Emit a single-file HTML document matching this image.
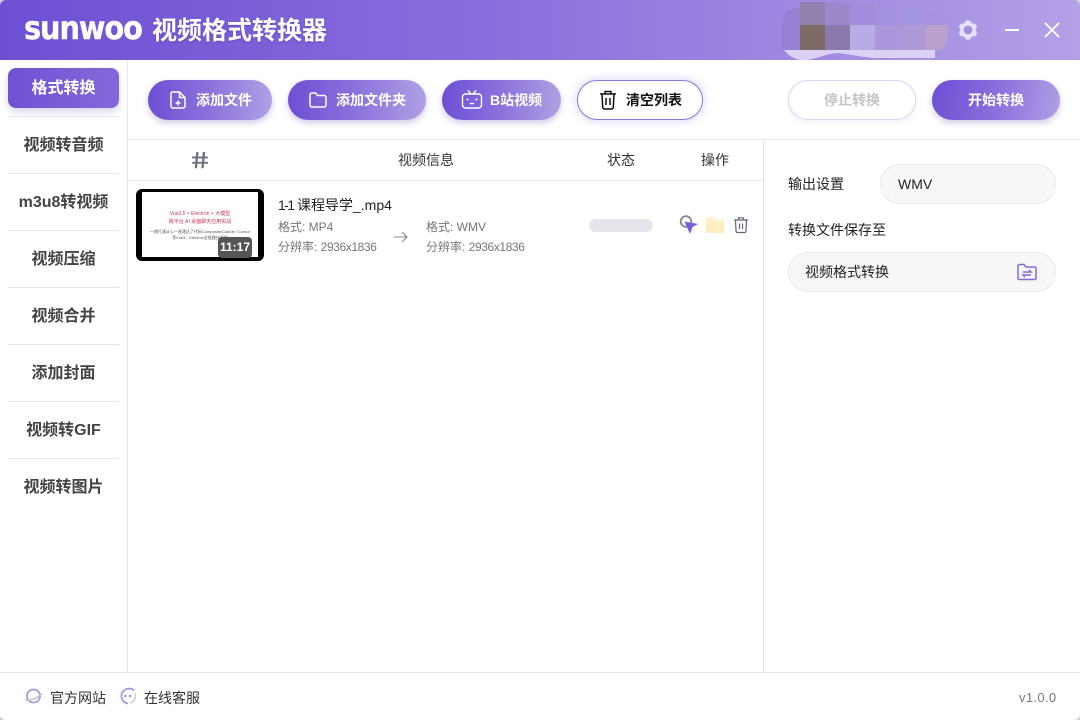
<!DOCTYPE html>
<html><head><meta charset="utf-8"><style>
*{box-sizing:border-box;margin:0;padding:0}
html,body{width:1080px;height:720px;overflow:hidden;background:#d0d0d0}
body{font-family:"Liberation Sans","Noto Sans CJK SC",sans-serif;color:#222}
#app{position:absolute;left:0;top:0;width:1080px;height:720px;background:#fff;border-radius:6px;overflow:hidden}
.a{position:absolute;white-space:nowrap}
#hd{left:0;top:0;width:1080px;height:60px;background:linear-gradient(90deg,#6d4fd3 0%,#8a6edd 45%,#b3a0e6 100%)}
.nav{left:8px;width:111px;text-align:center;font-size:16px;font-weight:700;color:#444;height:40px;line-height:40px}
.sep{left:8px;width:111px;height:1px;background:#e6e6e6}
.btn{height:40px;border-radius:20px;background:linear-gradient(90deg,#6d4fd3 0%,#8c72dc 50%,#b0a0e4 100%);box-shadow:0 3px 7px rgba(90,70,170,.28);color:#fff;font-size:14px;font-weight:700;line-height:40px}
.btn span{position:absolute;top:0}
.btn svg{position:absolute}
.th{font-size:14px;color:#333;top:150px;line-height:20px}
.g{font-size:12px;color:#777;line-height:16px}
.g b{font-weight:400;letter-spacing:-.4px}
.inp{background:#f7f7f7;border:1px solid #e8e8e8;border-radius:20px;height:40px;line-height:38px;font-size:14px;color:#222}
</style></head><body><div id="app">
<div class="a" id="hd"></div>
<div class="a" style="left:24px;top:10px;font-family:'DejaVu Sans',sans-serif;font-size:32px;font-weight:700;color:#fff;line-height:36px;letter-spacing:-1.2px;transform:scaleX(.9);transform-origin:left;-webkit-text-stroke:.4px #fff">sunwoo</div>
<div class="a" style="left:152px;top:14px;font-size:25px;font-weight:700;color:#fff;line-height:34px;text-shadow:0 1px 2px rgba(60,40,130,.35)">视频格式转换器</div>
<svg class="a" style="left:775px;top:0" width="190" height="62">
<path d="M25 25V2H75L100 3V25Z" fill="#a08cd8" opacity=".55"/><rect x="25" y="2" width="25" height="23" fill="#9080ae"/><rect x="50" y="3" width="25" height="22" fill="#9c89cc"/><rect x="125" y="8" width="25" height="17" fill="#a296e4" opacity=".8"/>
<rect x="100" y="5" width="25" height="20" fill="#a491e0" opacity=".5"/>
<path d="M14 10L25 8V25H25V50H7V28Q7 14 14 10Z" fill="#9580d4"/><rect x="25" y="25" width="25" height="25" fill="#7f6b66"/><rect x="50" y="25" width="25" height="25" fill="#8b78ac"/><rect x="75" y="25" width="25" height="25" fill="#b9ace6"/><rect x="100" y="25" width="25" height="25" fill="#ac96dc"/><rect x="125" y="25" width="25" height="25" fill="#ae9ad8"/>
<path d="M150 12Q173 14 173 25H150Z" fill="#a692de" opacity=".8"/><path d="M150 25H173V32Q173 45 165 50H150Z" fill="#b8a2cc"/>
<path d="M9 50H160V58H100C85 57 75 54 62 53C50 54 40 60 28 60C20 60 14 56 9 50Z" fill="#dbd2f3"/>
</svg>
<svg class="a" style="left:956px;top:18px" width="24" height="24" viewBox="0 0 24 24"><g fill="#e6e1f5"><circle cx="12" cy="12" r="7.800"/><circle cx="12" cy="5.500" r="3.300"/><circle cx="12" cy="18.500" r="3.300"/><circle cx="6.500" cy="8.800" r="3.300"/><circle cx="17.500" cy="8.800" r="3.300"/><circle cx="6.500" cy="15.200" r="3.300"/><circle cx="17.500" cy="15.200" r="3.300"/></g><circle cx="12" cy="12" r="4.400" fill="#a591e2"/></svg>
<div class="a" style="left:1005px;top:29px;width:14px;height:2px;background:#fff"></div>
<svg class="a" style="left:1043px;top:21px" width="18" height="18"><path d="M2 2L16 16M16 2L2 16" stroke="#fff" stroke-width="1.800" fill="none"/></svg>

<div class="a" style="left:127px;top:60px;width:1px;height:612px;background:#e6e6e6"></div>
<div class="a" style="left:8px;top:68px;width:111px;height:40px;border-radius:8px;background:linear-gradient(90deg,#6f52d4,#8468da);box-shadow:0 4px 8px rgba(90,70,170,.22);color:#fff;text-align:center;font-size:16px;font-weight:700;line-height:41px">格式转换</div>
<div class="a sep" style="top:116px"></div>
<div class="a nav" style="top:126px">视频转音频</div><div class="a sep" style="top:173px"></div>
<div class="a nav" style="top:183px">m3u8转视频</div><div class="a sep" style="top:230px"></div>
<div class="a nav" style="top:240px">视频压缩</div><div class="a sep" style="top:287px"></div>
<div class="a nav" style="top:297px">视频合并</div><div class="a sep" style="top:344px"></div>
<div class="a nav" style="top:354px">添加封面</div><div class="a sep" style="top:401px"></div>
<div class="a nav" style="top:411px">视频转GIF</div><div class="a sep" style="top:458px"></div>
<div class="a nav" style="top:468px">视频转图片</div>

<div class="a btn" style="left:148px;top:80px;width:124px"><svg style="left:21px;top:10px" width="18" height="20" viewBox="0 0 18 20" fill="none" stroke="#fff" stroke-width="1.500"><path d="M3.500 2h7L16 7.500V16a2 2 0 0 1-2 2H4a2 2 0 0 1-2-2V3.500A1.500 1.500 0 0 1 3.500 2zM10.500 2v5.500H16M9 10.500v5M6.500 13h5"/></svg><span style="left:48px">添加文件</span></div>
<div class="a btn" style="left:288px;top:80px;width:138px"><svg style="left:20px;top:10px" width="20" height="20" viewBox="0 0 20 20" fill="none" stroke="#fff" stroke-width="1.500"><path d="M2 5a2 2 0 0 1 2-2h3.500l2 2.500H16a2 2 0 0 1 2 2V15a2 2 0 0 1-2 2H4a2 2 0 0 1-2-2z"/></svg><span style="left:48px">添加文件夹</span></div>
<div class="a btn" style="left:442px;top:80px;width:119px"><svg style="left:19px;top:9px" width="22" height="22" viewBox="0 0 22 22" fill="none" stroke="#fff" stroke-width="1.400"><rect x="1.500" y="5" width="19" height="14" rx="3"/><path d="M7 1.500L10 5M15 1.500L12 5M5.500 10l2 1M16.500 10l-2 1M9 14c1 1 3 1 4 0"/></svg><span style="left:48px">B站视频</span></div>
<div class="a" style="left:577px;top:80px;width:126px;height:40px;border-radius:20px;background:#fff;border:1px solid #8d76dd;box-shadow:0 0 10px rgba(125,95,225,.32)"></div>
<svg class="a" style="left:598px;top:89px" width="20" height="22" viewBox="0 0 20 22" fill="none" stroke="#111" stroke-width="1.500"><path d="M2 5h16M7 5V2.500h6V5M4 5l.7 13a2 2 0 0 0 2 2h6.600a2 2 0 0 0 2-2L16 5M8 9v7M12 9v7"/></svg>
<div class="a" style="left:626px;top:80px;line-height:40px;font-size:14px;font-weight:700;color:#111">清空列表</div>
<div class="a" style="left:788px;top:80px;width:128px;height:40px;border-radius:20px;background:#fff;border:1px solid #dcd4f5;text-align:center;line-height:38px;font-size:14px;font-weight:700;color:#c4c4c4;box-shadow:0 2px 4px rgba(120,100,200,.1)">停止转换</div>
<div class="a btn" style="left:932px;top:80px;width:128px;text-align:center;background:linear-gradient(100deg,#6d4fd3 0%,#8a6edd 50%,#b0a0e4 100%)">开始转换</div>

<div class="a" style="left:128px;top:139px;width:952px;height:1px;background:#e6e6e6"></div>
<div class="a" style="left:128px;top:180px;width:635px;height:1px;background:#e8e8e8"></div>
<div class="a" style="left:763px;top:140px;width:1px;height:532px;background:#e6e6e6"></div>
<div class="a" style="left:192px;top:147px;font-size:23px;color:#6b7280;line-height:26px;transform:scaleX(1.25) skewX(8deg);transform-origin:left;-webkit-text-stroke:.6px #6b7280">#</div>
<div class="a th" style="left:398px">视频信息</div><div class="a th" style="left:607px">状态</div><div class="a th" style="left:701px">操作</div>

<div class="a" style="left:136px;top:189px;width:128px;height:72px;border-radius:6px;background:#000"></div>
<div class="a" style="left:142px;top:192px;width:116px;height:65px;background:#fff"></div>
<div class="a" style="left:142px;top:210px;width:116px;text-align:center;font-size:5px;line-height:8px;color:#c8395a">Vue3.5 + Electron + 大模型<br>跨平台 AI 桌面聊天应用实战</div>
<div class="a" style="left:142px;top:229px;width:116px;text-align:center;font-size:4px;line-height:6px;color:#555">一期打通从公一直通达了代码Composite/Claude / Cursor<br>等Vue3、Electron全链路技术栈</div>
<div class="a" style="left:218px;top:237px;width:34px;height:21px;border-radius:4px;background:#555;color:#fff;font-size:12px;font-weight:700;line-height:21px;text-align:center">11:17</div>
<div class="a" style="left:278px;top:195px;font-size:14px;color:#222;line-height:20px;letter-spacing:-1.6px">1-1</div>
<div class="a" style="left:297px;top:195px;font-size:14px;color:#222;line-height:20px">课程导学_.mp4</div>
<div class="a g" style="left:278px;top:219px">格式: MP4</div>
<div class="a g" style="left:278px;top:239px">分辨率: <b>2936x1836</b></div>
<svg class="a" style="left:393px;top:230px" width="16" height="14" fill="none" stroke="#888" stroke-width="1.100"><path d="M1 7h13M9 2l5 5-5 5"/></svg>
<div class="a g" style="left:426px;top:219px">格式: WMV</div>
<div class="a g" style="left:426px;top:239px">分辨率: <b>2936x1836</b></div>
<div class="a" style="left:589px;top:219px;width:64px;height:13px;border-radius:7px;background:#e5e6eb"></div>
<svg class="a" style="left:679px;top:214px" width="20" height="21" viewBox="0 0 20 21"><circle cx="7" cy="7.500" r="5.300" fill="none" stroke="#888" stroke-width="1.900"/><path d="M5.500 7.500L19 10L13.500 13L11 20Z" fill="#7a5be0"/></svg>
<svg class="a" style="left:705px;top:216px" width="20" height="18" viewBox="0 0 20 18"><path d="M1 3a1.500 1.500 0 0 1 1.500-1.500h5L9.500 3.500h8A1.500 1.500 0 0 1 19 5v11a1 1 0 0 1-1 1H2a1 1 0 0 1-1-1z" fill="#feeec0"/><rect x="3" y="4.500" width="14" height="1" fill="#fff8e2"/></svg>
<svg class="a" style="left:732px;top:216px" width="18" height="18" viewBox="0 0 18 18" fill="none" stroke="#5f6778" stroke-width="1.200"><path d="M2 4h14M6.500 4V1.800h5V4M3.500 4l.5 11a1.500 1.500 0 0 0 1.500 1.500h7A1.500 1.500 0 0 0 14 15l.5-11M7.500 7.500v5.500M10.500 7.500v5.500"/></svg>

<div class="a" style="left:788px;top:174px;font-size:14px;line-height:20px">输出设置</div>
<div class="a inp" style="left:880px;top:164px;width:176px;padding-left:17px">WMV</div>
<div class="a" style="left:788px;top:220px;font-size:14px;line-height:20px">转换文件保存至</div>
<div class="a inp" style="left:788px;top:252px;width:268px;padding-left:16px">视频格式转换</div>
<svg class="a" style="left:1017px;top:263px" width="20" height="18" viewBox="0 0 20 18" fill="none" stroke="#8169dd" stroke-width="1.500"><path d="M1 3a1.500 1.500 0 0 1 1.500-1.500h4.500L9 4h8.500A1.500 1.500 0 0 1 19 5.500V15a1.500 1.500 0 0 1-1.500 1.500h-15A1.500 1.500 0 0 1 1 15zM6 9h8l-2-2M14 12H6l2 2"/></svg>

<div class="a" style="left:0;top:672px;width:1080px;height:1px;background:#e6e6e6"></div>
<svg class="a" style="left:23px;top:687px" width="21" height="19" viewBox="0 0 21 19" fill="none"><circle cx="10.500" cy="9" r="6.500" stroke="#a996e6" stroke-width="1.800"/><path d="M2 12.500C6 14 14 12 19 6.500" stroke="#c9c3b8" stroke-width="1.600"/></svg>
<div class="a" style="left:50px;top:688px;font-size:14px;color:#333;line-height:20px">官方网站</div>
<svg class="a" style="left:118px;top:687px" width="20" height="19" viewBox="0 0 20 19" fill="none"><path d="M16 3.500A7.500 7.500 0 1 0 10 16.500" stroke="#a996e6" stroke-width="1.800"/><path d="M17 6a7.500 7.500 0 0 1-5 10" stroke="#d2cdc4" stroke-width="1.400"/><circle cx="7.500" cy="9" r="1.100" fill="#8c76df"/><circle cx="12" cy="9" r="1.100" fill="#8c76df"/></svg>
<div class="a" style="left:144px;top:688px;font-size:14px;color:#333;line-height:20px">在线客服</div>
<div class="a" style="left:1019px;top:689px;font-size:13px;color:#777;line-height:18px;letter-spacing:.35px">v1.0.0</div>
</div></body></html>
